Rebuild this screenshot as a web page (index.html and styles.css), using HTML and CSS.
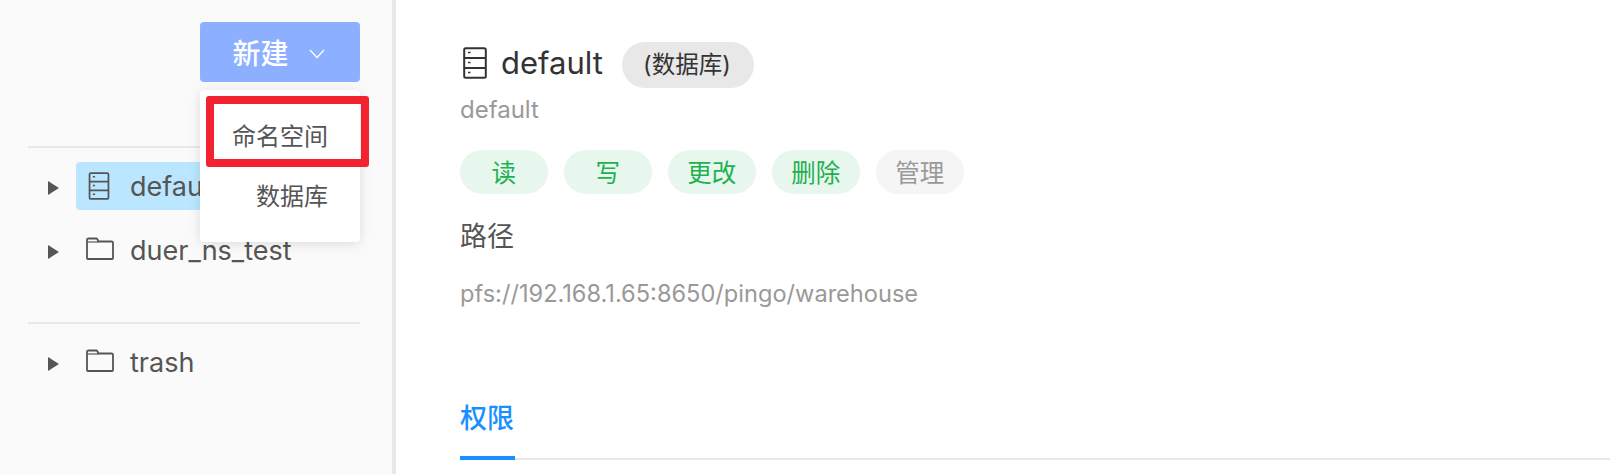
FILE: index.html
```html
<!DOCTYPE html>
<html lang="zh-CN">
<head>
  <meta charset="UTF-8">
  <title>default</title>
  <link rel="stylesheet" href="styles.css">
</head>
<body>
  <svg class="icon-defs" width="0" height="0">
    <symbol id="icon-db" viewBox="0 0 24 32">
      <rect x="1.2" y="1.2" width="21.6" height="29.6" rx="1.5" fill="none" stroke="currentColor" stroke-width="2"/>
      <path d="M1 11h22M1 21h22" fill="none" stroke="currentColor" stroke-width="2"/>
      <path d="M5 5.5h2.5M5 15.5h2.5M5 25.5h2.5" fill="none" stroke="currentColor" stroke-width="1.6"/>
    </symbol>
    <symbol id="icon-folder" viewBox="0 0 28 23">
      <path d="M1 21V3a1.5 1.5 0 0 1 1.500-1.500h7.500a1.500 1.500 0 0 1 1.300.700L12.500 4.500H25.500A1.500 1.500 0 0 1 27 6V21a1 1 0 0 1-1 1H2a1 1 0 0 1-1-1z" fill="none" stroke="currentColor" stroke-width="1.800"/>
      <path d="M1 5h11.500" fill="none" stroke="currentColor" stroke-width="1.200"/>
    </symbol>
  </svg>

  <aside class="sidebar">
    <div class="toolbar">
      <button class="btn-new">
        <span>新建</span>
        <svg class="btn-caret" width="16" height="10" viewBox="0 0 16 10"><path d="M1 1l7 7.500L15 1" fill="none" stroke="currentColor" stroke-width="1.300"/></svg>
      </button>
    </div>

    <div class="tree-section first">
      <div class="tree-row">
        <span class="tree-arrow"></span>
        <div class="tree-node selected">
          <svg class="node-icon db"><use href="#icon-db"/></svg>
          <span class="node-label">default</span>
        </div>
      </div>
      <div class="tree-row">
        <span class="tree-arrow"></span>
        <div class="tree-node">
          <svg class="node-icon folder"><use href="#icon-folder"/></svg>
          <span class="node-label">duer_ns_test</span>
        </div>
      </div>
    </div>

    <div class="tree-section second">
      <div class="tree-row">
        <span class="tree-arrow"></span>
        <div class="tree-node">
          <svg class="node-icon folder"><use href="#icon-folder"/></svg>
          <span class="node-label">trash</span>
        </div>
      </div>
    </div>

    <div class="dropdown">
      <div class="dropdown-item first">命名空间</div>
      <div class="dropdown-item second">数据库</div>
    </div>
    <div class="highlight-box"></div>
  </aside>

  <main class="content">
    <div class="title-row">
      <svg class="title-icon"><use href="#icon-db"/></svg>
      <h1 class="title">default</h1>
      <span class="type-pill">(数据库)</span>
    </div>
    <p class="subtitle">default</p>

    <div class="tags">
      <span class="tag on">读</span>
      <span class="tag on">写</span>
      <span class="tag on">更改</span>
      <span class="tag on">删除</span>
      <span class="tag">管理</span>
    </div>

    <h2 class="section-title">路径</h2>
    <p class="path">pfs://192.168.1.65:8650/pingo/warehouse</p>

    <div class="tabs">
      <span class="tab active">权限</span>
    </div>
  </main>
</body>
</html>
```

FILE: styles.css
```css
* {
  box-sizing: border-box;
}
html, body {
  height: 100%;
}
body {
  margin: 0;
  display: flex;
  height: 474px;
  overflow: hidden;
  background-color: white;
  color: #555;
  font-family: Inter, "Noto Sans CJK SC", sans-serif;
}
.icon-defs {
  position: absolute;
}
.sidebar {
  position: relative;
  width: 396px;
  flex-shrink: 0;
  padding: 22px 32px 0 28px;
  background-color: #fafafa;
  border-right: 4px solid #e8e8e8;
}
.toolbar {
  display: flex;
  justify-content: flex-end;
}
.btn-new {
  display: flex;
  align-items: center;
  justify-content: center;
  gap: 20px;
  width: 160px;
  height: 60px;
  padding: 0 3px 0 0;
  border: none;
  border-radius: 4px;
  background-color: #8cb0ff;
  color: white;
  font-family: inherit;
  font-size: 28px;
  font-weight: 500;
}
.btn-caret {
  margin-top: 4px;
}
.tree-section {
  border-top: 2px solid #e8e8e8;
}
.tree-section.first {
  margin-top: 64px;
  padding-top: 14px;
  height: 176px;
}
.tree-section.second {
  padding-top: 14px;
}
.tree-row {
  display: flex;
  align-items: center;
  height: 48px;
  margin-bottom: 16px;
}
.tree-arrow {
  width: 0;
  height: 0;
  margin: 4px 17px 0 20px;
  border-left: 11px solid #555;
  border-top: 7.500px solid transparent;
  border-bottom: 7.500px solid transparent;
}
.tree-node {
  display: flex;
  align-items: center;
  width: 200px;
  height: 48px;
  padding-left: 10px;
  border-radius: 4px;
  font-size: 27px;
}
.tree-node.selected {
  background-color: #bae7ff;
}
.node-icon {
  flex-shrink: 0;
  margin-right: 16px;
}
.node-icon.db {
  width: 22px;
  height: 28px;
  margin-left: 2px;
  margin-right: 20px;
}
.node-icon.folder {
  width: 28px;
  height: 23px;
  margin-bottom: 4px;
}
.dropdown {
  position: absolute;
  top: 90px;
  left: 200px;
  width: 160px;
  height: 152px;
  border-radius: 4px;
  background-color: white;
  box-shadow: 0 2px 12px rgba(0, 0, 0, 0.12);
  font-size: 24px;
  color: #555;
}
.dropdown-item {
  position: absolute;
}
.dropdown-item.first {
  top: 27px;
  left: 32px;
}
.dropdown-item.second {
  top: 87px;
  left: 56px;
}
.highlight-box {
  position: absolute;
  top: 96px;
  left: 206px;
  width: 163px;
  height: 71px;
  border: 8px solid #f2222e;
  border-radius: 3px;
}
.content {
  flex: 1;
  padding: 42px 0 0 64px;
}
.title-row {
  display: flex;
  align-items: center;
  height: 46px;
}
.title-icon {
  width: 24px;
  height: 32px;
  margin: 0 14px 4px 3px;
  color: #333;
}
.title {
  margin: 0 19px 6px 0;
  font-size: 31px;
  font-weight: 400;
  color: #333;
}
.type-pill {
  display: flex;
  align-items: center;
  justify-content: center;
  width: 132px;
  height: 46px;
  padding: 0 2px 4px 0;
  border-radius: 23px;
  background-color: #e8e8e8;
  color: #333;
  font-size: 23.500px;
}
.subtitle {
  margin: 8px 0 0;
  font-size: 24px;
  line-height: 28px;
  color: #999;
}
.tags {
  display: flex;
  gap: 16.500px;
  margin-top: 26px;
}
.tag {
  display: flex;
  align-items: center;
  justify-content: center;
  width: 87.500px;
  height: 44px;
  padding-bottom: 2px;
  border-radius: 22px;
  background-color: #f5f5f5;
  color: #999;
  font-size: 24.500px;
}
.tag.on {
  background-color: #e8f7ee;
  color: #1db14f;
}
.section-title {
  margin: 23px 0 0;
  font-size: 27px;
  font-weight: 400;
  line-height: 40px;
  color: #555;
}
.path {
  margin: 21px 0 0;
  font-size: 23.600px;
  line-height: 32px;
  color: #999;
}
.tabs {
  margin-top: 89px;
  border-bottom: 2px solid #e8e8e8;
}
.tab {
  display: inline-block;
  width: 55px;
  height: 61px;
  margin-bottom: -2px;
  border-bottom: 4px solid #1890ff;
  font-size: 27px;
  font-weight: 500;
  line-height: 40px;
  color: #1890ff;
  white-space: nowrap;
  vertical-align: top;
}
```
